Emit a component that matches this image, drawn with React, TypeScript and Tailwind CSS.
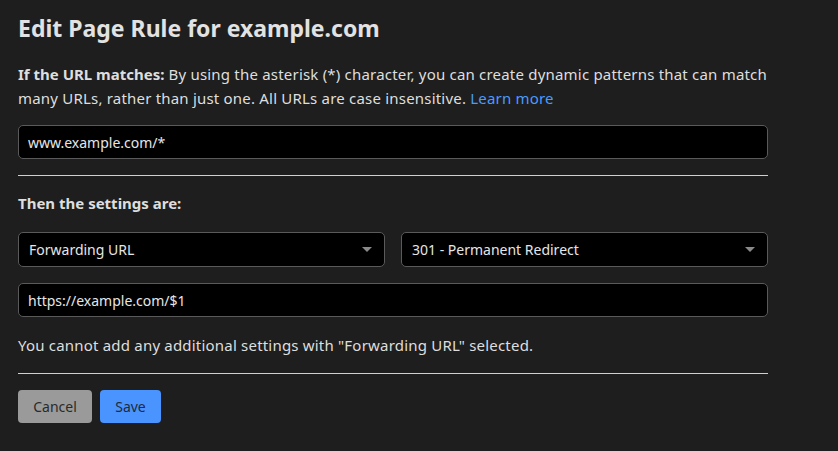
import { ChangeEvent, useState } from "react";

const FONT = { fontFamily: '"Noto Sans", "Open Sans", sans-serif' };

function Caret() {
  return (
    <svg width="10" height="6" viewBox="0 0 10 6" className="shrink-0">
      <path d="M0 0 L10 0 L5 5 Z" fill="#8a8a8a" />
    </svg>
  );
}

function SelectBox({ value }: { value: string }) {
  return (
    <div className="flex h-[35px] flex-1 items-center justify-between rounded-[5px] border border-[#5a5a5a] bg-black pl-[10px] pr-[12px] text-[14px] text-[#e6e6e6]">
      <span>{value}</span>
      <Caret />
    </div>
  );
}

function TextInput({
  value,
  onChange,
}: {
  value: string;
  onChange: (v: string) => void;
}) {
  return (
    <input
      value={value}
      onChange={(e: ChangeEvent<HTMLInputElement>) => onChange(e.target.value)}
      className="block h-[34px] w-full rounded-[5px] border border-[#5a5a5a] bg-black px-[9px] text-[14px] text-[#e6e6e6] outline-none"
      style={FONT}
    />
  );
}

export default function App() {
  const [pattern, setPattern] = useState("www.example.com/*");
  const [target, setTarget] = useState("https://example.com/$1");

  return (
    <div
      className="min-h-[451px] w-full bg-[#1e1e1e] pl-[18px] pt-[12px] text-[#dedede]"
      style={FONT}
    >
      <div className="w-[750px]">
        <h1 className="text-[23px] font-bold leading-[32px] text-[#e2e2e2]">
          Edit Page Rule for example.com
        </h1>

        <p className="mt-[18px] text-[15px] leading-[24px] tracking-[0.2px]">
          <span className="font-bold tracking-normal">If the URL matches:</span>{" "}
          By using the asterisk (*) character, you can create dynamic patterns
          that can match many URLs, rather than just one. All URLs are case
          insensitive.{" "}
          <a href="#" className="text-[#4a9bff]">
            Learn more
          </a>
        </p>

        <div className="mt-[15px]">
          <TextInput value={pattern} onChange={setPattern} />
        </div>

        <hr className="mt-[16px] border-t border-[#d0d0d0]" />

        <h2 className="mt-[15px] text-[15px] font-bold leading-[24px]">
          Then the settings are:
        </h2>

        <div className="mt-[17px] flex gap-[16px]">
          <SelectBox value="Forwarding URL" />
          <SelectBox value="301 - Permanent Redirect" />
        </div>

        <div className="mt-[16px]">
          <TextInput value={target} onChange={setTarget} />
        </div>

        <p className="mt-[16px] text-[15px] leading-[24px] tracking-[0.2px]">
          You cannot add any additional settings with "Forwarding URL" selected.
        </p>

        <hr className="mt-[16px] border-t border-[#d0d0d0]" />

        <div className="mt-[16px] flex gap-[8px]">
          <button className="h-[33px] w-[74px] rounded-[4px] bg-[#9a9a9a] text-[14px] text-[#2a2a2a]">
            Cancel
          </button>
          <button className="h-[33px] w-[61px] rounded-[4px] bg-[#4a94ff] text-[14px] text-[#1f2a3a]">
            Save
          </button>
        </div>
      </div>
    </div>
  );
}
